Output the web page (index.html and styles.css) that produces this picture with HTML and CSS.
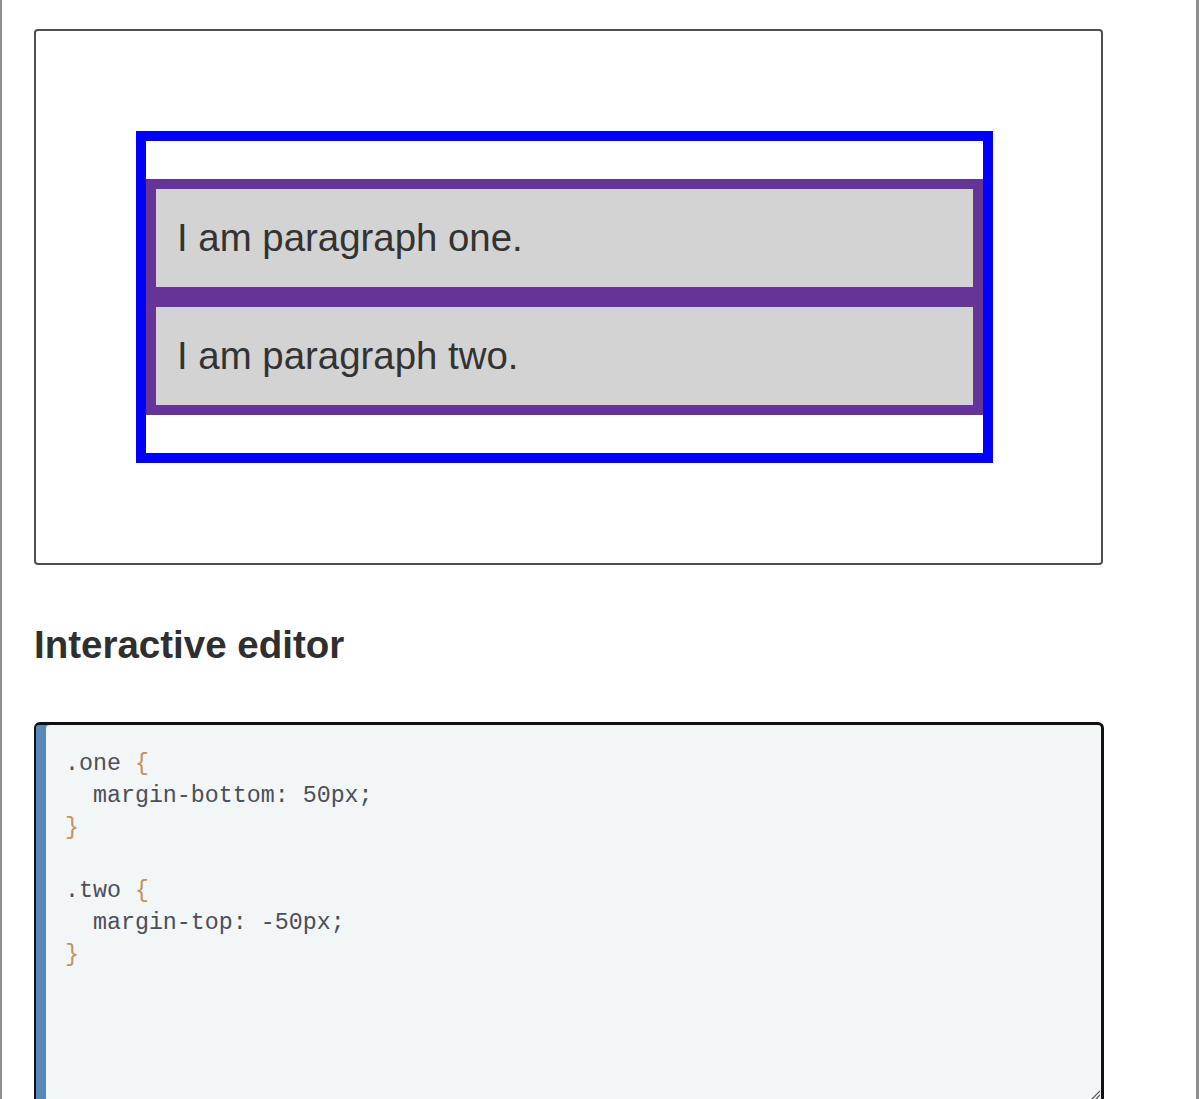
FILE: index.html
```html
<!DOCTYPE html>
<html lang="en">
<head>
<meta charset="utf-8">
<title>Margin collapsing</title>
<link rel="stylesheet" href="styles.css">
</head>
<body>
<div class="frame">
  <div class="demo">
    <div class="container">
      <p class="para">I am paragraph one.</p>
      <p class="para">I am paragraph two.</p>
    </div>
  </div>
  <h2 class="heading">Interactive editor</h2>
  <div class="editor">
<pre class="code"><span class="sel">.one</span> <span class="brace">{</span>
  margin-bottom: 50px;
<span class="brace">}</span>

<span class="sel">.two</span> <span class="brace">{</span>
  margin-top: -50px;
<span class="brace">}</span></pre>
    <svg class="grip" width="10" height="10" viewBox="0 0 10 10"><path d="M1 10 L10 1 M5 10 L10 5" stroke="#555" stroke-width="1.2" fill="none"/></svg>
  </div>
</div>
</body>
</html>
```
FILE: styles.css
```css
html, body {
  margin: 0;
  padding: 0;
  height: 100%;
  overflow: hidden;
  background: #fff;
}

.frame {
  box-sizing: border-box;
  height: 1099px;
  overflow: hidden;
  border-left: 2px solid #8e8e8e;
  border-right: 3px solid #8e8e8e;
  padding: 29px 0 0 32px;
  font-family: "Liberation Sans", Arial, sans-serif;
  color: #333;
}

.demo {
  box-sizing: border-box;
  width: 1069px;
  border: 2px solid #4e4e54;
  border-radius: 4px;
  padding: 100px;
}

.container {
  box-sizing: border-box;
  width: 857px;
  border: 10px solid #0000ff;
  padding: 38px 0;
}

.para {
  margin: 0;
  background: #d3d3d3;
  border: 10px solid #663399;
  padding: 27px 17px 27px 21px;
  font-size: 38.4px;
  line-height: 44px;
  color: #333;
}

.heading {
  margin: 58px 0 55px;
  font-size: 38.5px;
  line-height: 44px;
  font-weight: bold;
  color: #2f2f2f;
}

.editor {
  position: relative;
  box-sizing: border-box;
  width: 1070px;
  height: 382px;
  border: 3px solid #111;
  border-left-width: 2px;
  border-radius: 6px;
  background: #f2f6f7;
  box-shadow: inset 10px 0 0 #5788b9;
  padding: 24px 0 0 29px;
}

.code {
  margin: 0;
  font-family: "Liberation Mono", "DejaVu Sans Mono", monospace;
  font-size: 23.3px;
  line-height: 31.8px;
  color: #4b4f5a;
}

.brace {
  color: #c4915f;
}

.grip {
  position: absolute;
  right: 1px;
  bottom: 1px;
}
```
